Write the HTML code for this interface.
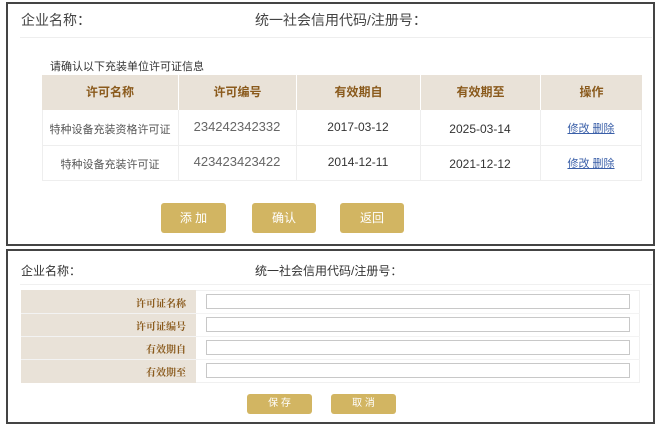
<!DOCTYPE html>
<html><head><meta charset="utf-8"><style>
*{margin:0;padding:0;box-sizing:border-box}
body{width:660px;height:428px;background:#fff;position:relative;overflow:hidden;font-family:"Liberation Sans","Noto Sans CJK SC",sans-serif;color:#333}
.a{position:absolute}
.panel{position:absolute;border:2px solid #444;background:#fff}
.t{position:absolute;white-space:nowrap}
.th{position:absolute;background:#e9e2d8;color:#8a5a1c;font-weight:bold;font-size:12px;text-align:center;line-height:35px;top:75px;height:35px}
.td{position:absolute;text-align:center;font-size:12px;color:#333}
.btn{position:absolute;background:#d2b562;color:#fff;border-radius:3px;text-align:center;font-size:12px}
.lbl{position:absolute;left:21px;width:175px;text-align:right;padding-right:10px;font-size:10px;font-weight:bold;color:#8a5a1c;font-family:"Noto Serif CJK SC",serif}
.inp{position:absolute;left:206px;width:424px;height:15px;border:1px solid #c8c8c8;background:#fff}
</style></head><body>
<div class="panel" style="left:6px;top:2px;width:649px;height:244px"></div>
<div class="t" style="left:21px;top:10px;font-size:14px;color:#444">企业名称：</div>
<div class="t" style="left:255px;top:10px;font-size:14px;color:#444">统一社会信用代码/注册号：</div>
<div class="a" style="left:20px;top:37px;width:632px;height:1px;background:#eee"></div>
<div class="t" style="left:50px;top:58px;font-size:11px;color:#333">请确认以下充装单位许可证信息</div>
<div class="a" style="left:42px;top:75px;width:600px;height:106px;border:1px solid #eee"></div>
<div class="th" style="left:42px;width:136px">许可名称</div>
<div class="th" style="left:178px;width:118px;border-left:1px solid #fff">许可编号</div>
<div class="th" style="left:296px;width:124px;border-left:1px solid #fff">有效期自</div>
<div class="th" style="left:420px;width:120px;border-left:1px solid #fff">有效期至</div>
<div class="th" style="left:540px;width:102px;border-left:1px solid #fff">操作</div>
<div class="a" style="left:42px;top:145px;width:600px;height:1px;background:#eee"></div>
<div class="a" style="left:178px;top:110px;width:1px;height:71px;background:#eee"></div>
<div class="a" style="left:296px;top:110px;width:1px;height:71px;background:#eee"></div>
<div class="a" style="left:420px;top:110px;width:1px;height:71px;background:#eee"></div>
<div class="a" style="left:540px;top:110px;width:1px;height:71px;background:#eee"></div>
<div class="td" style="left:42px;width:136px;top:121px;color:#555;font-size:11px">特种设备充装资格许可证</div>
<div class="td" style="left:178px;width:118px;top:119px;color:#666;font-size:13px">234242342332</div>
<div class="td" style="left:296px;width:124px;top:120px">2017-03-12</div>
<div class="td" style="left:420px;width:120px;top:122px">2025-03-14</div>
<div class="td" style="left:540px;width:102px;top:120px;color:#3a5fa8;text-decoration:underline;font-size:11px">修改 删除</div>
<div class="td" style="left:42px;width:136px;top:156px;color:#555;font-size:11px">特种设备充装许可证</div>
<div class="td" style="left:178px;width:118px;top:154px;color:#666;font-size:13px">423423423422</div>
<div class="td" style="left:296px;width:124px;top:155px">2014-12-11</div>
<div class="td" style="left:420px;width:120px;top:157px">2021-12-12</div>
<div class="td" style="left:540px;width:102px;top:155px;color:#3a5fa8;text-decoration:underline;font-size:11px">修改 删除</div>
<div class="btn" style="left:161px;top:203px;width:65px;height:30px;line-height:30px">添 加</div>
<div class="btn" style="left:252px;top:203px;width:64px;height:30px;line-height:30px">确认</div>
<div class="btn" style="left:340px;top:203px;width:64px;height:30px;line-height:30px">返回</div>

<div class="panel" style="left:6px;top:249px;width:649px;height:175px"></div>
<div class="t" style="left:21px;top:262px;font-size:12px;color:#333">企业名称：</div>
<div class="t" style="left:255px;top:262px;font-size:12px;color:#333">统一社会信用代码/注册号：</div>
<div class="a" style="left:20px;top:284px;width:632px;height:1px;background:#f0f0f0"></div>
<div class="a" style="left:21px;top:290px;width:619px;height:93px;border:1px solid #f0f0f0"></div>
<div class="a" style="left:21px;top:290px;width:175px;height:93px;background:#e9e2d8"></div>
<div class="a" style="left:21px;top:313px;width:619px;height:1px;background:#f3f3f3"></div>
<div class="a" style="left:21px;top:336px;width:619px;height:1px;background:#f3f3f3"></div>
<div class="a" style="left:21px;top:359px;width:619px;height:1px;background:#f3f3f3"></div>
<div class="lbl" style="top:295px">许可证名称</div>
<div class="lbl" style="top:318px">许可证编号</div>
<div class="lbl" style="top:341px">有效期自</div>
<div class="lbl" style="top:364px">有效期至</div>
<div class="inp" style="top:294px"></div>
<div class="inp" style="top:317px"></div>
<div class="inp" style="top:340px"></div>
<div class="inp" style="top:363px"></div>
<div class="btn" style="left:247px;top:394px;width:65px;height:20px;line-height:20px;font-size:10px">保 存</div>
<div class="btn" style="left:331px;top:394px;width:65px;height:20px;line-height:20px;font-size:10px">取 消</div>
</body></html>
